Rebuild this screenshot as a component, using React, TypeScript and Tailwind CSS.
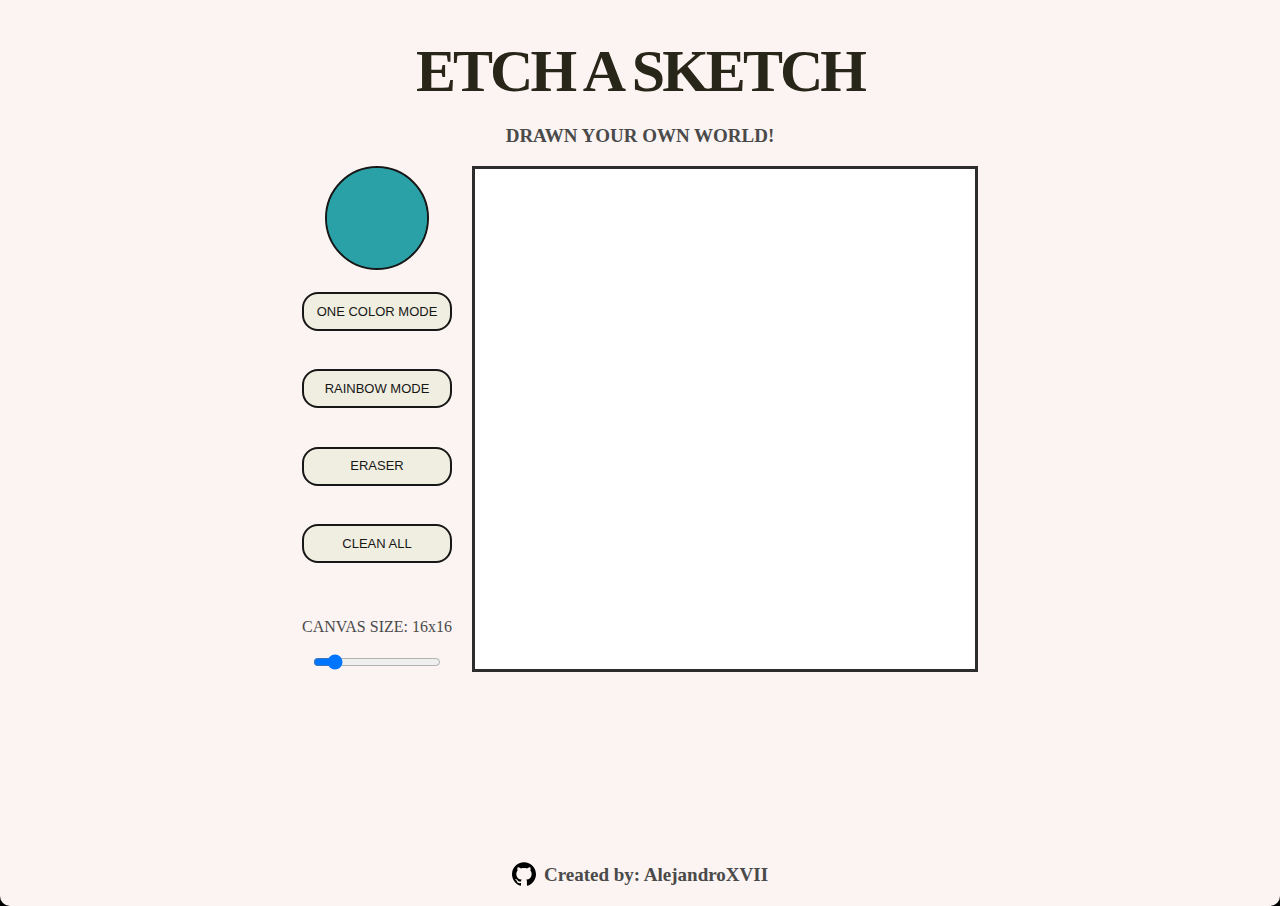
import { useState } from "react";

type Mode = "color" | "rainbow" | "eraser";

const modes: { id: Mode; label: string }[] = [
  { id: "color", label: "ONE COLOR MODE" },
  { id: "rainbow", label: "RAINBOW MODE" },
  { id: "eraser", label: "ERASER" },
];

const buttonStyle =
  "h-[39px] w-full cursor-pointer rounded-2xl border-2 border-[#171717] bg-[#f0eee0] font-['Liberation_Sans',Arial,sans-serif] text-[13px] text-[#171717]";

function Grid({ size, color, mode }: { size: number; color: string; mode: Mode }) {
  const [cells, setCells] = useState<Record<number, string>>({});

  const paint = (index: number) => {
    const fill =
      mode === "eraser"
        ? "#ffffff"
        : mode === "rainbow"
          ? `hsl(${Math.floor(Math.random() * 360)} 90% 55%)`
          : color;
    setCells((previous) => ({ ...previous, [index]: fill }));
  };

  return (
    <div
      className="grid size-[506px] border-3 border-[#2d2d2d] bg-white"
      style={{ gridTemplateColumns: `repeat(${size}, 1fr)`, gridTemplateRows: `repeat(${size}, 1fr)` }}
    >
      {Array.from({ length: size * size }, (_, index) => (
        <div
          key={index}
          style={{ backgroundColor: cells[index] }}
          onPointerEnter={(event) => event.buttons === 1 && paint(index)}
          onPointerDown={() => paint(index)}
        />
      ))}
    </div>
  );
}

export default function App() {
  const [color, setColor] = useState("#2aa1a6");
  const [mode, setMode] = useState<Mode>("color");
  const [size, setSize] = useState(16);
  const [clears, setClears] = useState(0);

  return (
    <div className="min-h-screen bg-black">
      <div className="flex min-h-screen flex-col items-center rounded-b-[10px] bg-[#fcf4f2] font-['Liberation_Serif','Times_New_Roman',serif] text-[#4a4a4a]">
        <header className="pt-9 text-center">
          <h1 className="text-[60px] leading-[70px] font-bold tracking-tighter text-[#282618]">
            ETCH A SKETCH
          </h1>
          <h2 className="mt-[19px] text-[19px] leading-[22px] font-bold">DRAWN YOUR OWN WORLD!</h2>
        </header>

        <main className="mt-[19px] flex gap-5">
          <div className="flex w-[150px] flex-col items-center">
            <input
              type="color"
              aria-label="Pen color"
              value={color}
              onChange={(event) => setColor(event.target.value)}
              className="size-[104px] cursor-pointer appearance-none rounded-full border-2 border-[#171717] bg-[#2aa1a6] p-0 [&::-webkit-color-swatch]:rounded-full [&::-webkit-color-swatch]:border-0 [&::-webkit-color-swatch-wrapper]:p-0"
            />
            <div className="mt-[22px] flex h-[271px] w-full flex-col justify-between">
              {modes.map(({ id, label }) => (
                <button key={id} type="button" className={buttonStyle} onClick={() => setMode(id)}>
                  {label}
                </button>
              ))}
              <button type="button" className={buttonStyle} onClick={() => setClears(clears + 1)}>
                CLEAN ALL
              </button>
            </div>
            <label htmlFor="size" className="mt-[55px] text-base leading-[18px] whitespace-nowrap">
              CANVAS SIZE: {size}x{size}
            </label>
            <input
              id="size"
              type="range"
              min={4}
              max={100}
              value={size}
              onChange={(event) => setSize(Number(event.target.value))}
              className="mt-[18px] h-4 w-32"
            />
          </div>
          <Grid key={`${size}-${clears}`} size={size} color={color} mode={mode} />
        </main>

        <footer className="mt-auto flex items-start gap-2 pb-[18px]">
          <a href="https://github.com/AlejandroXVII" aria-label="GitHub" className="text-black">
            <svg viewBox="0 0 24 24" className="block size-6" fill="currentColor" aria-hidden="true">
              <path d="M12 .297c-6.63 0-12 5.373-12 12 0 5.303 3.438 9.8 8.205 11.385.6.113.82-.258.82-.577 0-.285-.01-1.04-.015-2.04-3.338.724-4.042-1.61-4.042-1.61C4.422 18.07 3.633 17.7 3.633 17.7c-1.087-.744.084-.729.084-.729 1.205.084 1.838 1.236 1.838 1.236 1.07 1.835 2.809 1.305 3.495.998.108-.776.417-1.305.76-1.605-2.665-.3-5.466-1.332-5.466-5.93 0-1.31.465-2.38 1.235-3.22-.135-.303-.54-1.523.105-3.176 0 0 1.005-.322 3.3 1.23.96-.267 1.98-.399 3-.405 1.02.006 2.04.138 3 .405 2.28-1.552 3.285-1.23 3.285-1.23.645 1.653.24 2.873.12 3.176.765.84 1.23 1.91 1.23 3.22 0 4.61-2.805 5.625-5.475 5.92.42.36.81 1.096.81 2.22 0 1.606-.015 2.896-.015 3.286 0 .315.21.69.825.57C20.565 22.092 24 17.592 24 12.297c0-6.627-5.373-12-12-12" />
            </svg>
          </a>
          <p className="text-[19px] leading-[26px] font-bold">Created by: AlejandroXVII</p>
        </footer>
      </div>
    </div>
  );
}
